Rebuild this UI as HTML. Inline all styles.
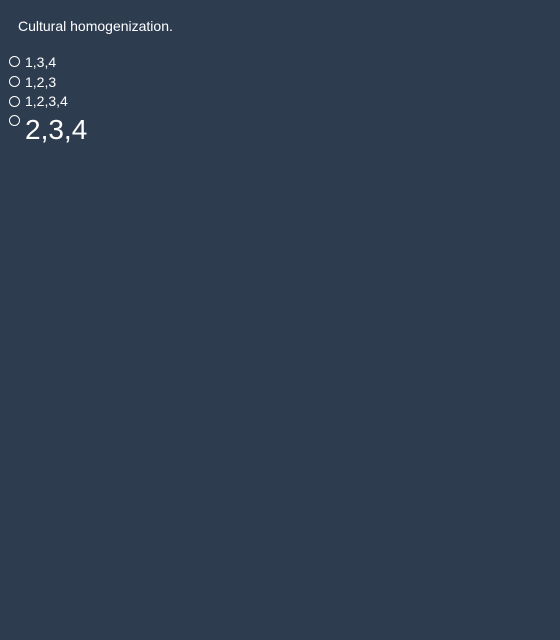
<!DOCTYPE html>
<html><head><style>
body{margin:0;background:#2d3c4f;width:560px;height:640px;font-family:"Liberation Sans",sans-serif;color:#fff;position:relative;overflow:hidden}
.t{position:absolute;left:18px;top:18px;font-size:14px}
.r{position:absolute;left:9px;width:9px;height:9px;border:1px solid #fff;border-radius:50%}
.o{position:absolute;left:25px;font-size:14px}
</style></head><body>
<div class="t">Cultural homogenization.</div>
<div class="r" style="top:56px"></div><div class="o" style="top:54px">1,3,4</div>
<div class="r" style="top:76px"></div><div class="o" style="top:74px">1,2,3</div>
<div class="r" style="top:96px"></div><div class="o" style="top:93px">1,2,3,4</div>
<div class="r" style="top:115px"></div><div class="o" style="top:114px;font-size:28px">2,3,4</div>
</body></html>
